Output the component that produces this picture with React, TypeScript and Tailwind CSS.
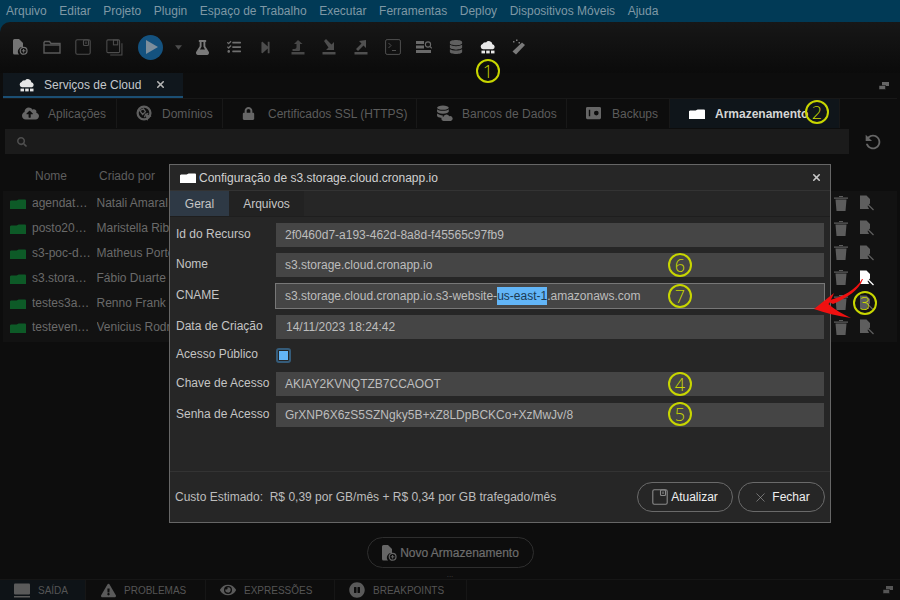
import React from "react";
import { Trash2, X } from "lucide-react";
import { FaFlask, FaStepForward, FaDatabase, FaLock, FaExclamationTriangle, FaEye, FaPauseCircle, FaSearch, FaCloudUploadAlt, FaTasks } from "react-icons/fa";
import { MdOutlineRefresh } from "react-icons/md";

type P = { className?: string; size?: number };

const CloudServer = ({ className = "", size = 16 }: P) => (
  <svg viewBox="0 0 16 14" width={size} height={(size * 14) / 16} className={className} fill="currentColor">
    <path d="M3 9.2a2.6 2.6 0 0 1-.4-5.1A3 3 0 0 1 6 2.4 3.6 3.6 0 0 1 12.4 4.2 2.6 2.6 0 0 1 13 9.2z" />
    <rect x="1.5" y="10.6" width="3.5" height="2.8" />
    <rect x="6.2" y="10.6" width="3.5" height="2.8" />
    <rect x="11" y="10.6" width="3.5" height="2.8" />
  </svg>
);
const Folder = ({ className = "", size = 16 }: P) => (
  <svg viewBox="0 0 16 10" width={size} height={(size * 10) / 16} className={className} fill="currentColor">
    <path d="M0 2.2 1 1.6h5.6L8.6 0.4H15a1 1 0 0 1 1 1V10H0z" />
  </svg>
);
const FolderOutline = ({ className = "" }: P) => (
  <svg viewBox="0 0 18 14" width="18" height="14" className={className} fill="none" stroke="currentColor" strokeWidth="1.4">
    <path d="M1 2.5V13h16V3.5H8L6.5 1.5H1.8z" />
    <path d="M1 5h16" />
  </svg>
);
const NewFile = ({ className = "", size = 16 }: P) => (
  <svg viewBox="0 0 16 16" width={size} height={size} className={className}>
    <path d="M1 1.5A1.5 1.5 0 0 1 2.5 0H7l4 4v4a4.5 4.5 0 0 0-3.9 7.5H2.5A1.5 1.5 0 0 1 1 14z" fill="currentColor" />
    <circle cx="11.6" cy="11.8" r="3.4" fill="none" stroke="currentColor" strokeWidth="1.2" />
    <path d="M11.6 10v3.6M9.8 11.8h3.6" stroke="currentColor" strokeWidth="1" />
  </svg>
);
const Save = ({ className = "", size = 16 }: P) => (
  <svg viewBox="0 0 16 16" width={size} height={size} className={className} fill="none" stroke="currentColor" strokeWidth="1.1">
    <rect x="0.8" y="0.8" width="14.4" height="14.4" rx="1.5" />
    <rect x="8.5" y="1" width="5" height="5.5" rx="1" />
    <path d="M11 2.5v2.5" />
  </svg>
);
const SaveAll = ({ className = "" }: P) => (
  <svg viewBox="0 0 16 16" width="17" height="17" className={className} fill="none" stroke="currentColor" strokeWidth="1">
    <rect x="0.8" y="0.8" width="12" height="12" rx="1" />
    <rect x="7" y="1" width="4" height="4.5" />
    <path d="M15 4v11H4" />
  </svg>
);
const ArrowTray = ({ className = "", d }: P & { d: string }) => (
  <svg viewBox="0 0 14 16" width="14" height="16" className={className} fill="currentColor">
    <path d={d} />
    <rect x="0.5" y="13" width="13" height="2.5" />
  </svg>
);
const Terminal = ({ className = "" }: P) => (
  <svg viewBox="0 0 16 16" width="16" height="16" className={className} fill="none" stroke="currentColor" strokeWidth="1">
    <rect x="0.6" y="0.6" width="14.8" height="14.8" rx="1.5" />
    <path d="M3.5 4 6 6.5 3.5 9M7 11.5h4" />
  </svg>
);
const ListSearch = ({ className = "" }: P) => (
  <svg viewBox="0 0 16 14" width="16" height="14" className={className} fill="currentColor">
    <rect x="0" y="1" width="8" height="3" /><rect x="0" y="5.5" width="8" height="3" /><rect x="0" y="10" width="15" height="3" />
    <circle cx="12" cy="4.5" r="2.6" fill="none" stroke="currentColor" strokeWidth="1.1" />
    <path d="m14 6.5 1.8 1.8" stroke="currentColor" strokeWidth="1.1" />
  </svg>
);
const Wand = ({ className = "" }: P) => (
  <svg viewBox="0 0 16 16" width="16" height="16" className={className} fill="currentColor">
    <path d="M11 3.5 14 6 5 15.5 1.5 12.5z" />
    <rect x="2" y="2" width="1.5" height="1.5" /><rect x="5" y="0.5" width="1.5" height="1.5" /><rect x="7.5" y="3" width="1.5" height="1.5" />
  </svg>
);
const Globe = ({ className = "" }: P) => (
  <svg viewBox="0 0 18 18" width="17" height="17" className={className} fill="none" stroke="currentColor">
    <circle cx="8.5" cy="8.5" r="6.8" strokeWidth="2.4" />
    <path d="M4 6 8 4l2 3-3 3zM9 13l1-3 3-1" strokeWidth="1.4" />
    <path d="m9.5 9 7 3-3 1.2L12 17z" fill="currentColor" stroke="none" />
  </svg>
);
const DbCloud = ({ className = "" }: P) => (
  <svg viewBox="0 0 16 16" width="17" height="17" className={className} fill="currentColor">
    <ellipse cx="6.5" cy="2.5" rx="5.5" ry="2" />
    <path d="M1 4v2.2c0 1.1 2.4 2 5.5 2S12 7.300 12 6.200V4c-1 1-3 1.500-5.500 1.500S2 5 1 4zM1 8v2.200c0 1 1.800 1.800 4.300 2L7 10a10 10 0 0 1-6-2z" />
    <path d="M7 15a2 2 0 0 1 0-4 3 3 0 0 1 5.500-.5A2.300 2.300 0 0 1 14 15z" />
  </svg>
);
const Vault = ({ className = "" }: P) => (
  <svg viewBox="0 0 16 16" width="15" height="15" className={className} fill="currentColor">
    <path fillRule="evenodd" d="M1.500 1h13A1.500 1.500 0 0 1 16 2.500v10a1.500 1.500 0 0 1-1.500 1.500h-13A1.500 1.500 0 0 1 0 12.500v-10A1.500 1.500 0 0 1 1.500 1zM3 4v7h1.500V4zm8 1a2.500 2.500 0 1 0 0 5 2.500 2.500 0 0 0 0-5z" />
  </svg>
);
const FileEdit = ({ className = "" }: P) => (
  <svg viewBox="0 0 14 16" width="14" height="16" className={className} fill="currentColor">
    <path d="M0 0.500h6.500L10 4v4.500L7.500 11l1.600 3H0z" />
    <path d="m8 9.500 5.500 5.500" stroke="currentColor" strokeWidth="1.300" />
  </svg>
);
const Restore = ({ className = "" }: P) => (
  <svg viewBox="0 0 10 8" width="10" height="8" className={className} fill="currentColor">
    <rect x="3" y="0" width="7" height="4" /><rect x="0" y="3.500" width="6.500" height="4" stroke="#111" strokeWidth="0.6" />
  </svg>
);

const Marker = ({ n, className }: { n: number; className: string }) => (
  <div className={`absolute flex h-[24px] w-[24px] items-center justify-center rounded-full border-2 border-[#c8d600] text-[18px] font-light leading-none text-[#c8d600] font-['Open_Sans',sans-serif] ${className}`}>
    {n}
  </div>
);

const menu = ["Arquivo", "Editar", "Projeto", "Plugin", "Espaço de Trabalho", "Executar", "Ferramentas", "Deploy", "Dispositivos Móveis", "Ajuda"];
const rows = [
  ["agendat…", "Natali Amaral"],
  ["posto20…", "Maristella Ribas"],
  ["s3-poc-d…", "Matheus Portela"],
  ["s3.stora…", "Fábio Duarte"],
  ["testes3a…", "Renno Frank"],
  ["testeven…", "Venicius Rodrigues"],
];

const TB = ({ children, className = "" }: { children: React.ReactNode; className?: string }) => (
  <div className={`flex h-[32px] w-[31.7px] items-center justify-center text-[#5f5f5f] ${className}`}>{children}</div>
);

const SubTab = ({ icon, label, w, active }: { icon: React.ReactNode; label: string; w: string; active?: boolean }) => (
  <div className={`flex h-full shrink-0 items-center border-r border-[#181818] pl-[19px] ${w} ${active ? "bg-[#0f151a] font-bold text-[#d5d5d5]" : "text-[#5c5c5c]"}`}>
    <span className="flex w-[26px] shrink-0 items-center">{icon}</span>
    <span>{label}</span>
  </div>
);

const BottomTab = ({ icon, label, w, active }: { icon: React.ReactNode; label: string; w: string; active?: boolean }) => (
  <div className={`flex h-full items-center border-r border-[#161616] ${w} ${active ? "bg-[#0e1317]" : ""}`}>
    <span className="flex w-[38px] shrink-0 justify-center pl-[6px] text-[#5a5a5a]">{icon}</span>
    <span>{label}</span>
  </div>
);

const Field = ({ label, value, className = "" }: { label: string; value: React.ReactNode; className?: string }) => (
  <div className={`flex items-center ${className}`}>
    <div className="w-[106px] shrink-0 pb-[3px] pl-[6px] text-[#c4c4c4]">{label}</div>
    <div className="flex h-[24px] w-[548px] items-center bg-[#454545] pl-[9px] text-[#bdbdbd]">{value}</div>
  </div>
);

export default function App() {
  return (
    <div className="relative flex h-[600px] w-[900px] flex-col overflow-hidden bg-[#0d0d0d] font-['Liberation_Sans',Arial,sans-serif] text-[12px]">
      <div className="flex h-[22px] shrink-0 items-center gap-[12.600px] bg-[#013a56] pl-[6px] text-[#7f98a5]">
        {menu.map((m) => <span key={m}>{m}</span>)}
      </div>

      <div className="bg-[#013a56]">
        <div className="flex h-[51px] items-center rounded-tl-[10px] bg-gradient-to-b from-[#171717] to-[#0b0b0b] pl-[4px] pb-[1px]">
          <TB><NewFile size={16} className="text-[#747474]" /></TB>
          <TB><FolderOutline className="text-[#5a5a5a]" /></TB>
          <TB><Save className="text-[#4d4d4d]" /></TB>
          <TB><SaveAll className="text-[#4d4d4d]" /></TB>
          <div className="flex h-[32px] w-[40px] items-center justify-center">
            <div className="flex h-[25px] w-[25px] items-center justify-center rounded-full bg-[#14527f]">
              <svg viewBox="0 0 12 14" width="12" height="14" className="ml-[2px] text-[#7d8e9c]" fill="currentColor"><path d="M0 0 12 7 0 14z" /></svg>
            </div>
          </div>
          <div className="flex w-[16px] justify-center">
            <svg viewBox="0 0 8 5" width="7" height="5" className="text-[#4c4c4c]" fill="currentColor"><path d="M0 0h8L4 5z" /></svg>
          </div>
          <TB><FaFlask size={15} className="text-[#7a7a7a]" /></TB>
          <TB><FaTasks size={14} className="text-[#6f6f6f]" /></TB>
          <TB><FaStepForward size={13} className="text-[#4d4d4d]" /></TB>
          <TB><ArrowTray className="text-[#474747]" d="M7 1 3 5h2.500v3C5.500 10 4 10 1.500 10v2H8a1 1 0 0 0 1-1V5h2.500z" /></TB>
          <TB><ArrowTray className="text-[#4d4d4d]" d="M2 2 4 0l5.500 5.500L12 3v8H4l2.500-2.500z" /></TB>
          <TB><ArrowTray className="text-[#505050]" d="M12 1v8l-2.500-2.500L4 12 2 10l5.500-5.500L5 2z" /></TB>
          <TB><Terminal className="text-[#505050]" /></TB>
          <TB><ListSearch className="text-[#6a6a6a]" /></TB>
          <TB><FaDatabase size={14} className="text-[#606060]" /></TB>
          <TB><CloudServer size={16} className="text-[#e8e8e8]" /></TB>
          <TB><Wand className="text-[#7a7a7a]" /></TB>
        </div>
      </div>

      <div className="flex h-[25px] shrink-0 items-stretch justify-between pl-[3px] pr-[11px]">
        <div className="flex w-[180px] items-center border-b-2 border-[#1b4f74] bg-[#10171d] pl-[16px] text-[#c4c8cc]">
          <CloudServer size={16} className="text-[#e6e6e6]" />
          <span className="ml-[9px]">Serviços de Cloud</span>
          <X size={11} strokeWidth={3.500} className="ml-[14px] text-[#b5b5b5]" />
        </div>
        <div className="flex items-center"><Restore className="text-[#666]" /></div>
      </div>

      <div className="mx-[3px] flex h-[31px] shrink-0 items-stretch border-t border-[#181818] pb-[1px]">
        <SubTab w="w-[114px]" label="Aplicações" icon={<FaCloudUploadAlt size={17} className="text-[#666]" />} />
        <SubTab w="w-[106px]" label="Domínios" icon={<Globe className="text-[#5f5f5f]" />} />
        <SubTab w="w-[194px]" label="Certificados SSL (HTTPS)" icon={<FaLock size={13} className="text-[#666]" />} />
        <SubTab w="w-[150px]" label="Bancos de Dados" icon={<DbCloud className="text-[#666]" />} />
        <SubTab w="w-[103px]" label="Backups" icon={<Vault className="text-[#666]" />} />
        <SubTab active w="w-[170px]" label="Armazenamento" icon={<Folder size={16} className="text-white" />} />
      </div>

      <div className="flex h-[25px] shrink-0 items-stretch pl-[5px]">
        <div className="flex w-[844px] items-center bg-[#1b1b1b] pl-[12px]">
          <FaSearch size={10} className="text-[#4e4e4e]" />
        </div>
        <div className="flex flex-1 items-center justify-center pr-[4px]">
          <MdOutlineRefresh size={22} className="-scale-x-100 text-[#666]" />
        </div>
      </div>

      <div className="mx-[3px] mt-[7px] flex h-[30px] shrink-0 items-center text-[#5e5e5e]">
        <span className="w-[96px] pl-[32px]">Nome</span>
        <span>Criado por</span>
      </div>

      <div className="mx-[3px] flex flex-col bg-[#121212] pr-[23px] pb-[2px]">
        {rows.map(([a, b], i) => (
          <div key={a} className="flex h-[24.800px] items-center text-[#6a6a6a]">
            <Folder size={16} className="ml-[7px] mt-[2px] shrink-0 text-[#0d5a27]" />
            <span className="ml-[6px] w-[64.500px] shrink-0 truncate">{a}</span>
            <span className="w-[110px] shrink-0 truncate">{b}</span>
            <span className="flex-1" />
            <svg viewBox="0 0 14 15" width="14" height="15" className="text-[#5c5c5c]" fill="currentColor">
              <path d="M0 1.500h14v1.200H0zM1.500 3.500h11L11.500 15h-9zM5 0h4v1H5z" />
            </svg>
            <FileEdit className={`ml-[12px] ${i === 3 ? "text-white" : "text-[#5e5e5e]"}`} />
          </div>
        ))}
      </div>

      <div className="flex-1" />
      <div className="mb-[4px] flex shrink-0 justify-center">
        <div className="flex h-[31px] w-[167px] items-center justify-center rounded-full border border-[#2e2e2e] font-bold text-[#6d6d6d]">
          <NewFile size={16} className="mr-[3px] text-[#666]" />
          <span className="font-normal [-webkit-text-stroke:0.2px_#6d6d6d]">Novo Armazenamento</span>
        </div>
      </div>
      <div className="flex h-[7px] shrink-0 justify-center text-[8px] leading-[6px] text-[#444]">...</div>

      <div className="flex h-[21px] shrink-0 items-stretch border-t border-[#161616] text-[10px] text-[#555]">
        <BottomTab active w="w-[86px]" label="SAÍDA" icon={<svg viewBox="0 0 16 14" width="16" height="15" fill="currentColor"><rect width="16" height="11" rx="1" /><rect y="12.500" width="16" height="1.500" /></svg>} />
        <BottomTab w="w-[120px]" label="PROBLEMAS" icon={<FaExclamationTriangle size={15} />} />
        <BottomTab w="w-[129px]" label="EXPRESSÕES" icon={<FaEye size={16} />} />
        <BottomTab w="w-[132px]" label="BREAKPOINTS" icon={<FaPauseCircle size={16} />} />
        <div className="flex flex-1 items-center justify-end pr-[7px]"><Restore className="text-[#555]" /></div>
      </div>

      {/* modal dialog */}
      <div className="absolute left-[169px] top-[164px] flex h-[359px] w-[662px] flex-col border border-[#666] bg-[#262626]">
        <div className="flex h-[26px] shrink-0 items-center border-b border-[#333] pl-[10px] pr-[8px] text-[#d0d0d0]">
          <Folder size={16} className="mt-[1px] text-white" />
          <span className="ml-[3px]">Configuração de s3.storage.cloud.cronapp.io</span>
          <X size={11} strokeWidth={3.500} className="ml-auto text-[#c8c8c8]" />
        </div>
        <div className="flex h-[26px] shrink-0 items-stretch border-b border-[#1e1e1e] text-[#c6c6c6]">
          <div className="flex w-[59px] items-center justify-center bg-[#2e3945]">Geral</div>
          <div className="flex w-[75px] items-center justify-center bg-[#222]">Arquivos</div>
        </div>
        <div className="flex flex-1 flex-col pt-[6px]">
          <Field label="Id do Recurso" value="2f0460d7-a193-462d-8a8d-f45565c97fb9" />
          <Field className="mt-[6px]" label="Nome" value="s3.storage.cloud.cronapp.io" />
          <div className="mt-[6px] flex items-center">
            <div className="w-[105px] shrink-0 pb-[3px] pl-[6px] text-[#c4c4c4]">CNAME</div>
            <div className="flex h-[26px] w-[550px] items-center border border-[#777] bg-[#454545] pl-[9px] text-[#bdbdbd]">
              <span>s3.storage.cloud.cronapp.io.s3-website-</span>
              <span className="bg-[#62b5f7] text-[#1c3a52]">us-east-1</span>
              <span>.amazonaws.com</span>
            </div>
          </div>
          <Field className="mt-[6px]" label="Data de Criação" value={<span className="pl-[1px]">14/11/2023 18:24:42</span>} />
          <div className="mt-[6px] flex h-[21px] items-center">
            <div className="w-[106px] shrink-0 pb-[3px] pl-[6px] text-[#c4c4c4]">Acesso Público</div>
            <div className="flex h-[15px] w-[15px] items-center justify-center rounded-[3px] border-2 border-[#355c7a] bg-[#262626]">
              <div className="h-[9px] w-[9px] bg-[#62b5f7]" />
            </div>
          </div>
          <Field className="mt-[6px]" label="Chave de Acesso" value="AKIAY2KVNQTZB7CCAOOT" />
          <Field className="mt-[7px]" label="Senha de Acesso" value="GrXNP6X6zS5SZNgky5B+xZ8LDpBCKCo+XzMwJv/8" />
        </div>
        <div className="flex h-[51px] shrink-0 items-center border-t border-[#333] pl-[5px] pr-[5px] text-[#bdbdbd]">
          <span className="whitespace-pre">Custo Estimado:  R$ 0,39 por GB/mês + R$ 0,34 por GB trafegado/mês</span>
          <div className="ml-auto flex gap-[5px] text-[#efefef]">
            <div className="flex h-[30px] w-[96px] items-center justify-center rounded-full border border-[#6a6a6a]">
              <Save size={16} className="mr-[3px] text-[#8a8a8a]" />
              <span>Atualizar</span>
            </div>
            <div className="flex h-[30px] w-[87px] items-center justify-center rounded-full border border-[#6a6a6a]">
              <X size={15} strokeWidth={1} className="mr-[4px] text-[#a0a0a0]" />
              <span>Fechar</span>
            </div>
          </div>
        </div>
      </div>

      {/* annotations */}
      <Marker n={1} className="left-[476px] top-[59px]" />
      <Marker n={2} className="left-[805px] top-[100px]" />
      <Marker n={3} className="left-[853px] top-[291px]" />
      <Marker n={4} className="left-[668px] top-[372px]" />
      <Marker n={5} className="left-[668px] top-[402px]" />
      <Marker n={6} className="left-[668px] top-[253px]" />
      <Marker n={7} className="left-[668px] top-[284px]" />
      <svg className="absolute left-[805px] top-[270px]" width="65" height="55" viewBox="0 0 65 55" fill="none">
        <path d="M57 9C51 20 37 27 22 31 L28 34 C42 28 54 20 58 9z" fill="#f01010" />
        <path d="M9 39 29 23 25 32 22 36z" fill="#f01010" />
        <path d="M9 39 22 33 C30 40 38 44 46 48 C32 46 20 43 9 39z" fill="#f01010" />
      </svg>
    </div>
  );
}
